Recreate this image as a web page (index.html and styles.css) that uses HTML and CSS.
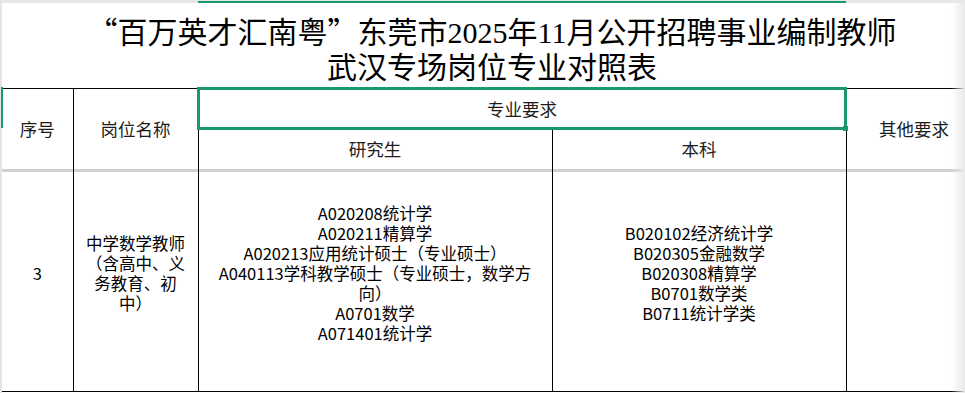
FILE: index.html
```html
<!DOCTYPE html>
<html lang="zh-CN">
<head>
<meta charset="utf-8">
<title>武汉专场岗位专业对照表</title>
<link rel="stylesheet" href="styles.css">
</head>
<body>
<div class="sheet">
  <div class="rowhdr"></div>
  <div class="main">
    <div class="colhdr"></div>
    <div class="title">
      <div class="tline"><span class="q">“</span>百万英才汇南粤<span class="q">”</span>东莞市2025年11月公开招聘事业编制教师</div>
      <div class="tline">武汉专场岗位专业对照表</div>
    </div>
    <table class="grid">
      <colgroup>
        <col class="c1"><col class="c2"><col class="c3"><col class="c4"><col class="c5">
      </colgroup>
      <tr class="h1">
        <td rowspan="2" class="hcell nb">序号</td>
        <td rowspan="2" class="hcell nb">岗位名称</td>
        <td colspan="2" class="hcell">专业要求</td>
        <td rowspan="2" class="hcell nb">其他要求</td>
      </tr>
      <tr class="h2">
        <td class="hcell nb">研究生</td>
        <td class="hcell nb">本科</td>
      </tr>
      <tr class="sep">
        <td></td><td></td><td></td><td></td><td></td>
      </tr>
      <tr class="data">
        <td class="dcell">3</td>
        <td class="dcell">中学数学教师<br>（含高中、义<br>务教育、初<br>中）</td>
        <td class="dcell">
          <div>A020208统计学</div>
          <div>A020211精算学</div>
          <div>A020213应用统计硕士（专业硕士）</div>
          <div>A040113学科教学硕士（专业硕士，数学方</div>
          <div>向）</div>
          <div>A0701数学</div>
          <div>A071401统计学</div>
        </td>
        <td class="dcell">
          <div>B020102经济统计学</div>
          <div>B020305金融数学</div>
          <div>B020308精算学</div>
          <div>B0701数学类</div>
          <div>B0711统计学类</div>
        </td>
        <td class="dcell"></td>
      </tr>
    </table>
  </div>
</div>
<div class="colsel"></div>
<div class="rowsel"></div>
<div class="selbox"></div>
<div class="handle"></div>
<div class="edge"></div>
</body>
</html>
```

FILE: styles.css
```css
html, body {
  margin: 0;
  padding: 0;
}
body {
  width: 965px;
  height: 393px;
  overflow: hidden;
  position: relative;
  background: #ffffff;
  font-family: "Noto Sans CJK SC", sans-serif;
  color: #111;
}
.sheet {
  display: flex;
  width: 1000px;
}
.rowhdr {
  flex: none;
  width: 2px;
  height: 393px;
  background: #e4e4e4;
}
.main {
  flex: none;
  width: 980px;
}
.colhdr {
  height: 3px;
  background: #e6e6e6;
}
.title {
  height: 85px;
  box-sizing: border-box;
  padding-top: 10px;
  text-align: center;
  font-family: "Liberation Serif", "Noto Sans CJK SC", serif;
  font-size: 30px;
  line-height: 35px;
  color: #000;
}
.tline {
  white-space: nowrap;
}
.q {
  font-family: "Noto Sans CJK SC", sans-serif;
  font-feature-settings: "fwid" 1;
}
.grid {
  border-collapse: collapse;
  table-layout: fixed;
  width: 980px;
  border-top: 1px solid #000;
}
.c1 { width: 71px; }
.c2 { width: 125px; }
.c3 { width: 354px; }
.c4 { width: 294px; }
.c5 { width: 136px; }
.grid td {
  border: 1px solid #000;
  padding: 0;
  text-align: center;
  vertical-align: middle;
}
.grid td:first-child {
  border-left: none;
}
.h1 { height: 40px; }
.h2 { height: 40px; }
.hcell {
  font-size: 17.5px;
  color: #1c1c1c;
}
.grid td.nb {
  border-bottom: none;
}
.sep { height: 3px; }
.grid .sep td {
  height: 3px;
  background: #d0d0d0;
  border-top: none;
  border-bottom: none;
}
.data { height: 220px; }
.grid td.dcell {
  border-top: none;
  font-size: 16.5px;
  line-height: 20px;
  color: #000;
  padding-bottom: 16px;
  white-space: nowrap;
}
.colsel {
  position: absolute;
  left: 198px;
  top: 1px;
  width: 648px;
  height: 2px;
  background: #1a9a6a;
}
.rowsel {
  position: absolute;
  left: 1px;
  top: 87px;
  width: 2px;
  height: 41px;
  background: #1a9a6a;
}
.selbox {
  position: absolute;
  left: 197px;
  top: 87px;
  width: 650px;
  height: 43px;
  box-sizing: border-box;
  border: 3px solid #1a9a6a;
}
.handle {
  position: absolute;
  left: 843px;
  top: 126px;
  width: 5px;
  height: 5px;
  background: #1a9a6a;
}
.edge {
  position: absolute;
  right: 0;
  top: 0;
  width: 14px;
  height: 393px;
  background: linear-gradient(to right, rgba(236,236,236,0), #e9e9e9);
}
```
